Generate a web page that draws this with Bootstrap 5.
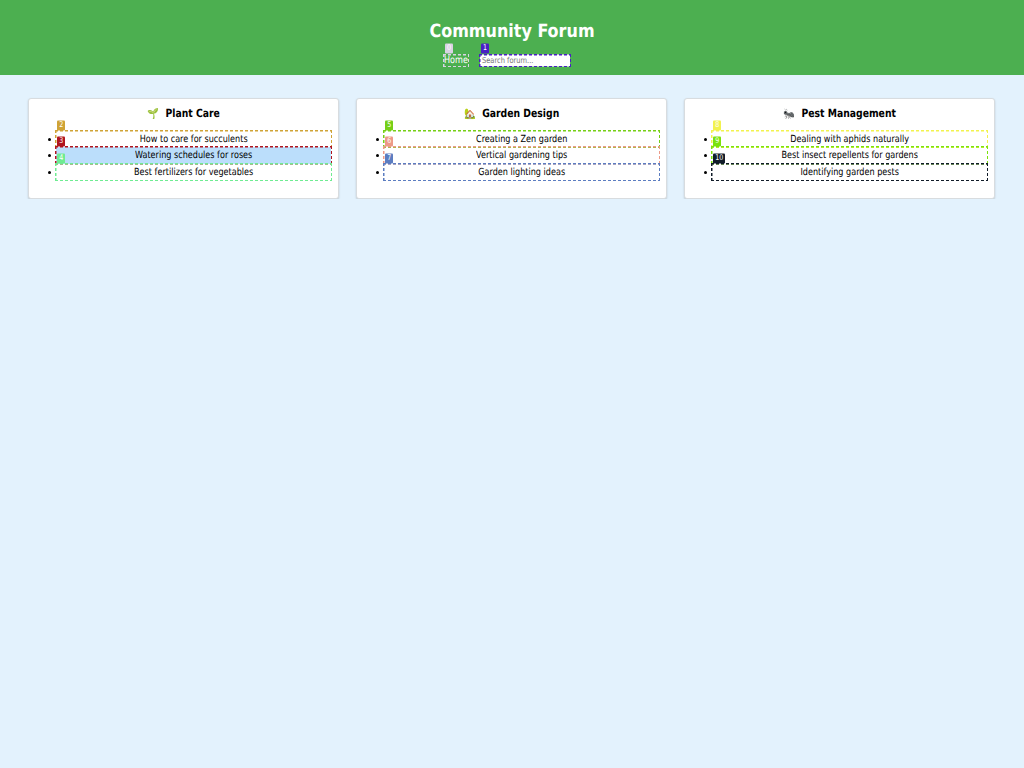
<!DOCTYPE html>
<html lang="en">
<head>
<meta charset="utf-8">
<meta name="viewport" content="width=device-width, initial-scale=1">
<title>Community Forum</title>
<link href="https://cdn.jsdelivr.net/npm/bootstrap@5.3.0/dist/css/bootstrap.min.css" rel="stylesheet">
<style>
body{background:#e3f2fd;color:#000;font-family:"DejaVu Sans Condensed","DejaVu Sans",sans-serif;font-stretch:condensed;font-size:9px;line-height:16.6px;text-rendering:geometricPrecision}
.site-header{background:#4caf50;height:75.3px;padding-top:21px;color:#fff}
.site-title{font-size:17.8px;line-height:22px;font-weight:700;margin:0}
.tall{display:inline-block;transform:scaleY(1.09)}
.site-title .tall{transform:scaleY(1.02)}
.home-link{color:#fff;font-size:9px;line-height:13px;width:24px;height:11px;white-space:nowrap;text-decoration:none}
.search-box{width:90px;font-size:7.45px;line-height:10px;border:0;padding:0 2px;color:#757575;background:#fff;display:block;height:11px;transform:scaleY(1.1)}
.search-box::placeholder{color:#757575;opacity:1}
.site-nav{gap:12px;margin-top:12.4px;margin-left:-10px}
.site-nav .tag{top:-11px}
.topics{padding:22.7px 28.8px 0 28.2px;gap:17px}
.topic{height:101px;background:#fff;border:1px solid #d8dcdf;border-radius:3px;box-shadow:0 1px 2px rgba(0,0,0,.18);padding:6px 7px 0 27px;flex:1 1 0}
.topic h2{font-size:10.3px;line-height:18px;font-weight:700;margin:0 0 7px -20px}
.topic h2 .emoji{font-size:9.5px;margin-right:3px}
.topic ul{padding:0;margin:0;list-style:none}
.topic li,.marked{position:relative}
.topic li{height:16.5px;line-height:18px}
.topic li::before{content:"";position:absolute;left:-8.5px;top:6.7px;width:3px;height:3px;border-radius:50%;background:#000}
.marked::after{content:"";position:absolute;inset:-1px;pointer-events:none;
--h:repeating-linear-gradient(90deg,var(--c) 0 3px,transparent 3.3px 4.8px,var(--c) 5px);
--v:repeating-linear-gradient(180deg,var(--c) 0 3px,transparent 3.3px 4.8px,var(--c) 5px);
background:var(--h) top/100% 1.5px no-repeat,var(--h) bottom/100% 1.5px no-repeat,var(--v) left/1.5px 100% no-repeat,var(--v) right/1.5px 100% no-repeat}
.tag{position:absolute;z-index:2;left:1px;top:-10.2px;background:var(--c);color:#fff;font-size:7px;line-height:9px;height:9px;padding:0 2px;border-radius:1px;transform:scaleY(1.13)}
.current{background:#bbdefb}
</style>
</head>
<body>
<header class="site-header text-center">
<h1 class="site-title"><span class="tall">Community Forum</span></h1>
<nav class="site-nav d-flex justify-content-center">
<a class="home-link marked" style="--c:#d9d3e4" href="#"><span class="tag">0</span><span class="tall">Home</span></a>
<div class="marked" style="--c:#4a1fc4"><span class="tag">1</span><input class="search-box" placeholder="Search forum..."></div>
</nav>
</header>
<main class="topics d-flex text-center">
<section class="topic">
<h2><span class="tall"><span class="emoji">🌱</span> Plant Care</span></h2>
<ul>
<li class="marked" style="--c:#cfa336"><span class="tag">2</span><span class="tall">How to care for succulents</span></li>
<li class="marked current" style="--c:#b0151f"><span class="tag">3</span><span class="tall">Watering schedules for roses</span></li>
<li class="marked" style="--c:#6fec92"><span class="tag">4</span><span class="tall">Best fertilizers for vegetables</span></li>
</ul>
</section>
<section class="topic">
<h2><span class="tall"><span class="emoji">🏡</span> Garden Design</span></h2>
<ul>
<li class="marked" style="--c:#76cf16"><span class="tag">5</span><span class="tall">Creating a Zen garden</span></li>
<li class="marked" style="--c:#ed9a88"><span class="tag">6</span><span class="tall">Vertical gardening tips</span></li>
<li class="marked" style="--c:#5c7dc1"><span class="tag">7</span><span class="tall">Garden lighting ideas</span></li>
</ul>
</section>
<section class="topic">
<h2><span class="tall"><span class="emoji">🐜</span> Pest Management</span></h2>
<ul>
<li class="marked" style="--c:#f2f24e"><span class="tag">8</span><span class="tall">Dealing with aphids naturally</span></li>
<li class="marked" style="--c:#7be20b"><span class="tag">9</span><span class="tall">Best insect repellents for gardens</span></li>
<li class="marked" style="--c:#111c29"><span class="tag">10</span><span class="tall">Identifying garden pests</span></li>
</ul>
</section>
</main>
<script src="https://cdn.jsdelivr.net/npm/bootstrap@5.3.0/dist/js/bootstrap.bundle.min.js"></script>
</body>
</html>
